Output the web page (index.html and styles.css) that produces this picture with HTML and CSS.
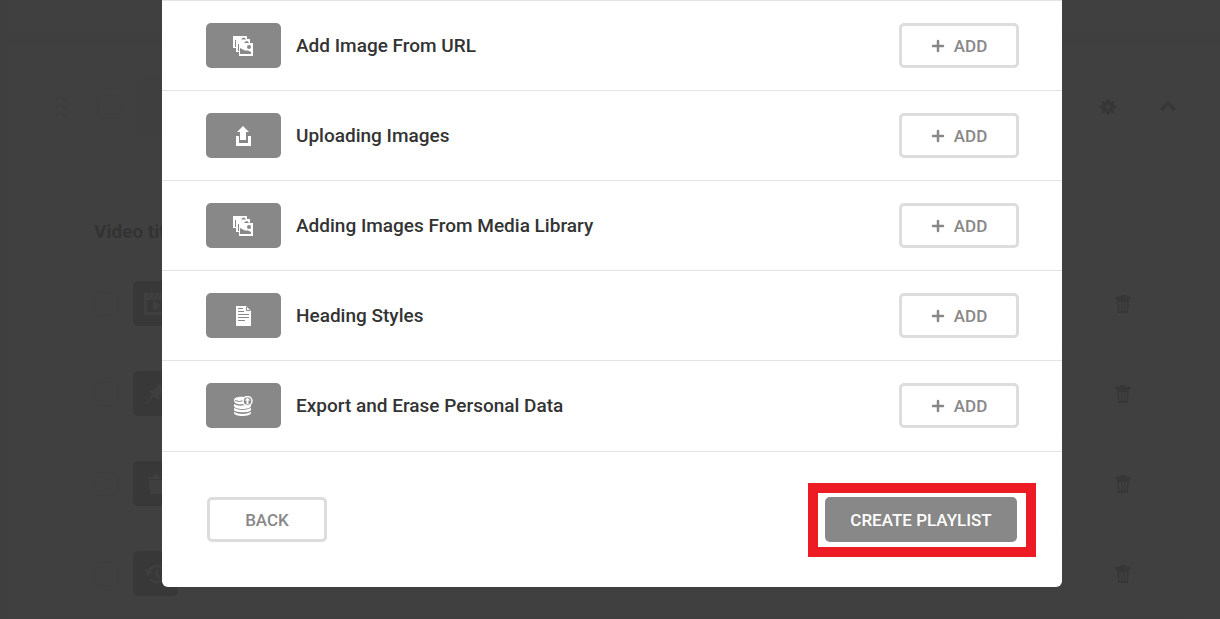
FILE: index.html
```html
<!DOCTYPE html>
<html lang="en">
<head>
    <meta charset="UTF-8">
    <meta name="viewport" content="width=device-width, initial-scale=1.0">
    <title>Create Playlist</title>
    <link rel="stylesheet" href="styles.css">
</head>
<body>
    <!-- shared icons -->
    <svg class="sprite" aria-hidden="true">
        <symbol id="icon-images" viewBox="0 0 20 20">
            <path fill="#fff" d="M0 0h14v3h3v4h3v13H6v-4H3v-4H0z"/>
            <path fill="#888" d="M8 3.500q3-4 5 0zM11 7q3-4 5 0zM7 12l5 2.500h3l3 1.500v2H7z"/>
            <circle fill="#888" cx="16" cy="11" r="2"/>
            <path fill="none" stroke="#888" d="M2.500 4v7M5.500 8v7"/>
        </symbol>
        <symbol id="icon-upload" viewBox="0 0 20 20">
            <path fill="#fff" d="M10 0l6 6h-3v8H7V6H4zM3 10h3v7h9v-7h3v10H3z"/>
        </symbol>
        <symbol id="icon-document" viewBox="0 0 20 20">
            <path fill="#fff" d="M3 0h10l5 5v15H3z"/>
            <path fill="none" stroke="#888" d="M5 2.500h5M5 5.500h6M5 8.500h11M5 11.500h11M5 14.500h7M13.500 1v3.500H17"/>
        </symbol>
        <symbol id="icon-database" viewBox="0 0 20 20">
            <path fill="#fff" d="M1 4c0-4 11-4 12-2l-3 3 1 3C6 9 1 8 1 4zM1 8q5 3 11 1 3 2 6 0v1c0 4-17 4-17 0zM1 12q8 4 17 0v2c0 3-17 3-17 0zM1 16q8 4 17 0v1c0 4-17 4-17 0z"/>
            <path stroke="#888" fill="none" d="M2 4.500q4 2 9 0"/>
            <circle cx="14.500" cy="5" r="4.500" fill="#888" stroke="#fff" stroke-width="1.500"/>
            <path fill="#fff" d="M14.500 1.500l3 3h-2V8h-2V4.500h-2z"/>
        </symbol>
        <symbol id="icon-plus" viewBox="0 0 14 14">
            <path fill="none" stroke="currentColor" stroke-width="2.500" stroke-linecap="round" d="M7 2v10M2 7h10"/>
        </symbol>
        <symbol id="icon-trash" viewBox="0 0 16 18">
            <path fill="currentColor" fill-rule="evenodd" d="M5 0h6v1.500h4q1 1 1 3h-2L13 18H3L2 4.500H0q0-2 1-3h4zM4 7l.5 9h1.500V7zM7.300 7v9h1.400V7zM10 7v9h1.500L12 7z"/>
        </symbol>
    </svg>

    <!-- playlist editor, dimmed while the modal is open -->
    <main class="page">
        <div class="panel panel-prev"></div>
        <section class="panel">
            <div class="panel-head">
                <svg class="drag" viewBox="0 0 12 20"><g fill="currentColor"><circle cx="2" cy="2" r="2"/><circle cx="9" cy="2" r="2"/><circle cx="2" cy="10" r="2"/><circle cx="9" cy="10" r="2"/><circle cx="2" cy="18" r="2"/><circle cx="9" cy="18" r="2"/></g></svg>
                <input type="checkbox" class="check" aria-label="Select playlist">
                <span class="cover"></span>
                <button class="icon-btn push" aria-label="Settings">
                    <svg width="16" height="16" viewBox="0 0 16 16"><circle cx="8" cy="8" r="4" fill="none" stroke="currentColor" stroke-width="4"/><path stroke="currentColor" stroke-width="3" d="M8 0v3M8 13v3M0 8h3M13 8h3M2.500 2.500l2 2M11.500 11.500l2 2M13.500 2.500l-2 2M4.500 11.500l-2 2"/></svg>
                </button>
                <button class="icon-btn" aria-label="Collapse">
                    <svg width="16" height="16" viewBox="0 0 16 16"><path fill="none" stroke="currentColor" stroke-width="4" d="M1 11l7-7 7 7"/></svg>
                </button>
            </div>
            <h2 class="list-title">Video title</h2>
            <ul class="videos">
                <li class="video">
                    <input type="checkbox" class="check" aria-label="Select video">
                    <span class="video-icon"><svg width="24" height="22" viewBox="0 0 24 22"><path fill="currentColor" fill-rule="evenodd" d="M0 0h24v22H0zM3 7v12h18V7zM9 8l8 5-8 5z"/><path stroke="#e0e0e0" d="M3 5l3-4M8 5l3-4M13 5l3-4M18 5l3-4"/></svg></span>
                    <button class="icon-btn push" aria-label="Delete"><svg width="16" height="18"><use href="#icon-trash"/></svg></button>
                </li>
                <li class="video">
                    <input type="checkbox" class="check" aria-label="Select video">
                    <span class="video-icon"><svg width="20" height="20" viewBox="0 0 20 20"><path fill="currentColor" d="M13 0l7 7-2 1-1-1-4 4q1 3-1 5l-4-4-7 8-1-1 7-8-4-4q2-2 5-1l4-4-1-1z"/></svg></span>
                    <button class="icon-btn push" aria-label="Delete"><svg width="16" height="18"><use href="#icon-trash"/></svg></button>
                </li>
                <li class="video">
                    <input type="checkbox" class="check" aria-label="Select video">
                    <span class="video-icon"><svg width="16" height="20" viewBox="0 0 16 20"><path fill="currentColor" d="M0 3h5q0-3 3-3t3 3h5v2H0zM1 6h14l-1 14H2z"/></svg></span>
                    <button class="icon-btn push" aria-label="Delete"><svg width="16" height="18"><use href="#icon-trash"/></svg></button>
                </li>
                <li class="video">
                    <input type="checkbox" class="check" aria-label="Select video">
                    <span class="video-icon"><svg width="22" height="20" viewBox="0 0 22 20"><path fill="none" stroke="currentColor" stroke-width="2" d="M4 7a8 8 0 1 1 1 8M12 5v6l3 3"/><path fill="currentColor" d="M0 5l8 3-6 4z"/></svg></span>
                    <button class="icon-btn push" aria-label="Delete"><svg width="16" height="18"><use href="#icon-trash"/></svg></button>
                </li>
            </ul>
        </section>
    </main>

    <div class="overlay">
        <div class="modal" role="dialog" aria-modal="true" aria-label="Create Playlist">
            <ul class="items">
                <li class="item">
                    <span class="thumb"><svg width="20" height="20"><use href="#icon-images"/></svg></span>
                    <span class="item-title">Add Image From URL</span>
                    <button class="btn btn-outline"><svg width="14" height="14"><use href="#icon-plus"/></svg>ADD</button>
                </li>
                <li class="item">
                    <span class="thumb"><svg width="20" height="20"><use href="#icon-upload"/></svg></span>
                    <span class="item-title">Uploading Images</span>
                    <button class="btn btn-outline"><svg width="14" height="14"><use href="#icon-plus"/></svg>ADD</button>
                </li>
                <li class="item">
                    <span class="thumb"><svg width="20" height="20"><use href="#icon-images"/></svg></span>
                    <span class="item-title">Adding Images From Media Library</span>
                    <button class="btn btn-outline"><svg width="14" height="14"><use href="#icon-plus"/></svg>ADD</button>
                </li>
                <li class="item">
                    <span class="thumb"><svg width="20" height="20"><use href="#icon-document"/></svg></span>
                    <span class="item-title">Heading Styles</span>
                    <button class="btn btn-outline"><svg width="14" height="14"><use href="#icon-plus"/></svg>ADD</button>
                </li>
                <li class="item">
                    <span class="thumb"><svg width="20" height="20"><use href="#icon-database"/></svg></span>
                    <span class="item-title">Export and Erase Personal Data</span>
                    <button class="btn btn-outline"><svg width="14" height="14"><use href="#icon-plus"/></svg>ADD</button>
                </li>
            </ul>
            <div class="modal-footer">
                <button class="btn btn-outline">BACK</button>
                <span class="highlight"><button class="btn btn-primary">CREATE PLAYLIST</button></span>
            </div>
        </div>
    </div>
</body>
</html>
```
FILE: styles.css
```css
* {
    box-sizing: border-box;
}
body {
    margin: 0;
    font-family: Roboto, "Liberation Sans", sans-serif;
    background: #fcfcfc;
    color: #333;
    height: 100vh;
    overflow: hidden;
}
ul {
    list-style: none;
    margin: 0;
    padding: 0;
}
button {
    font-family: inherit;
    cursor: pointer;
}
.sprite {
    display: block;
    width: 0;
    height: 0;
}

/* page behind the modal */
.page {
    display: flex;
    flex-direction: column;
    gap: 14px;
    padding: 0 0 0 6px;
    color: #d8d8d8;
}
.panel {
    background: #fff;
    padding: 0 34px 0 28px;
}
.panel-prev {
    height: 31px;
}
.panel-head {
    display: flex;
    align-items: center;
    height: 124px;
    padding-left: 21px;
}
.drag {
    width: 12px;
    height: 20px;
    margin-right: 31px;
    color: #f4f4f4;
}
.check {
    appearance: none;
    width: 24px;
    height: 24px;
    margin: 0 15px 0 0;
    border: 1px solid #f6f6f6;
    border-radius: 5px;
}
.cover {
    width: 100px;
    height: 58px;
    background: #fafafa;
    border-radius: 4px;
}
.icon-btn {
    display: flex;
    padding: 0;
    border: none;
    background: none;
    color: #dcdcdc;
}
.push {
    margin-left: auto;
}
.panel-head .icon-btn {
    margin-right: 10px;
}
.panel-head .push {
    margin-right: 44px;
}
.list-title {
    margin: 0;
    padding: 50px 60px 14px;
    font-size: 19px;
    line-height: 26px;
    font-weight: 700;
    color: #ccc;
}
.video {
    display: flex;
    align-items: center;
    height: 90px;
    padding: 0 55px 0 60px;
    border-bottom: 1px solid #fbfbfb;
}
.video-icon {
    display: flex;
    align-items: center;
    justify-content: center;
    width: 45px;
    height: 45px;
    border-radius: 5px;
    background: #e0e0e0;
    color: #fafafa;
}

/* modal */
.overlay {
    position: fixed;
    inset: 0;
    display: flex;
    align-items: flex-start;
    justify-content: center;
    padding-left: 4px;
    background: rgba(0, 0, 0, 0.75);
}
.modal {
    width: 100%;
    max-width: 900px;
    background: #fff;
    border-radius: 0 0 6px 6px;
}
.items {
    padding-bottom: 1px;
    border-bottom: 1px solid #e3e3e3;
}
.item {
    display: flex;
    align-items: center;
    gap: 15px;
    height: 90px;
    padding: 0 43px 0 44px;
    border-top: 1px solid #e3e3e3;
}
.item-title {
    flex: 1;
    font-size: 19px;
    line-height: 26px;
    font-weight: 500;
}
.thumb {
    display: flex;
    align-items: center;
    justify-content: center;
    width: 75px;
    height: 45px;
    padding-right: 1px;
    border-radius: 5px;
    background: #888;
}
.btn {
    display: flex;
    align-items: center;
    justify-content: center;
    gap: 9px;
    min-width: 120px;
    height: 45px;
    border-radius: 5px;
    font-size: 17px;
    font-weight: 500;
}
.btn-outline {
    border: 3px solid #ddd;
    background: #fff;
    color: #888;
}
.btn-primary {
    min-width: 192px;
    border: none;
    padding: 0 16px;
    background: #888;
    color: #fff;
}
.modal-footer {
    display: flex;
    align-items: center;
    justify-content: space-between;
    padding: 45px;
}
.highlight {
    position: relative;
}
.highlight::after {
    content: "";
    position: absolute;
    inset: -14px -19px -15px -17px;
    border: 10px solid #ed1c24;
    pointer-events: none;
}
```
